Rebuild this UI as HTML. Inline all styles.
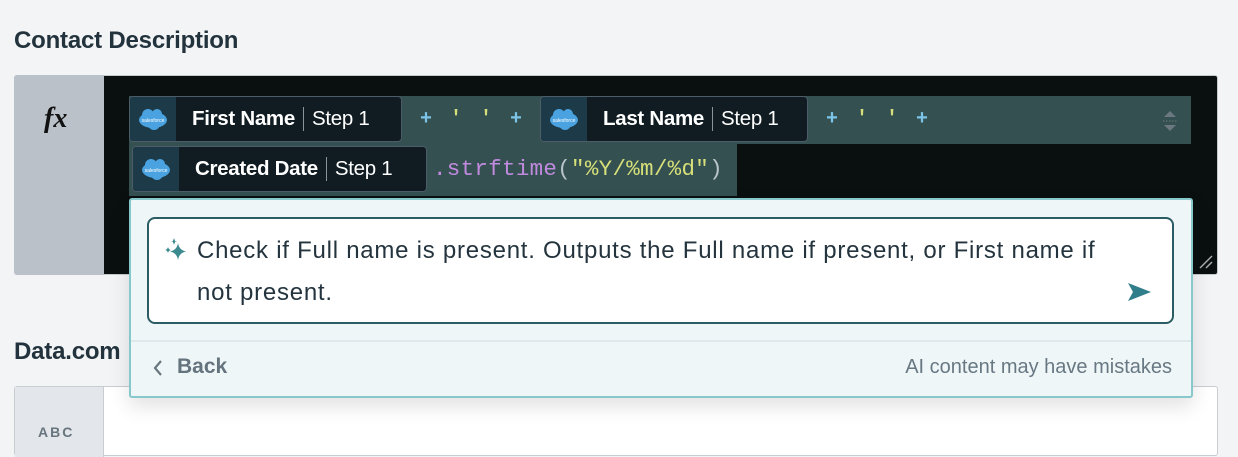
<!DOCTYPE html>
<html><head><style>
*{box-sizing:border-box;margin:0;padding:0}
body{width:1238px;height:450px;background:#f3f4f6;font-family:"Liberation Sans",sans-serif;position:relative;overflow:hidden;color:#24343e}
.a{position:absolute}
.h{font-weight:bold;font-size:24px;color:#23333d;letter-spacing:-0.2px}
.pill{position:absolute;height:46px;background:#111c22;border:1.5px solid #4c5c68;border-radius:4px;display:flex;align-items:center;color:#fff;font-size:20.5px;white-space:nowrap;overflow:hidden}
.pill .ic{width:46px;height:100%;background:#1c3a48;display:flex;align-items:center;justify-content:center;flex:none}
.pill b{margin-left:16px;letter-spacing:-0.3px}
.pill .sep{width:1px;height:24px;background:#8a949c;margin:0 8px}
.pill span.s{letter-spacing:-0.3px;margin-right:14px}
.op{position:absolute;color:#7cc5e8;font-size:20px;font-family:"Liberation Mono",monospace;letter-spacing:3px;font-weight:bold}
.q{color:#d6df7a}
</style></head><body>
<div class="a h" style="left:14px;top:27px">Contact Description</div>
<div class="a" style="left:14px;top:75px;width:1204px;height:200px;background:#0a0f10;border-radius:3px;border:1px solid #c4c9ce"></div>
<div class="a" style="left:14px;top:75px;width:90px;height:200px;background:#bac1c8;border-radius:3px 0 0 3px"></div>
<div class="a" style="left:44px;top:103px;font-family:'Liberation Serif',serif;font-style:italic;font-weight:bold;font-size:28px;color:#111">fx</div>
<div class="a" style="left:129px;top:96px;width:1062px;height:48px;background:#345050"></div>
<div class="a" style="left:129px;top:144px;width:608px;height:52px;background:#345050"></div>
<svg class="a" style="left:1160px;top:108px" width="20" height="26"><path d="M4 9 L10 3 L16 9Z M4 17 L10 23 L16 17Z" fill="#6b7880"/><path d="M3 13 H17" stroke="#6b7880" stroke-dasharray="1.5 1.5"/></svg>

<div class="pill" style="left:129px;top:96px;width:273px"><div class="ic"><svg width="34" height="24"><ellipse cx="17" cy="13" rx="14" ry="8" fill="#4aa3e0"/><circle cx="12" cy="8" r="6" fill="#4aa3e0"/><circle cx="21" cy="7" r="5" fill="#4aa3e0"/><circle cx="18" cy="17" r="6" fill="#4aa3e0"/><text x="17" y="15" font-size="5" fill="#fff" text-anchor="middle">salesforce</text></svg></div><b>First Name</b><div class="sep"></div><span class="s">Step 1</span></div>
<div class="op" style="left:420px;top:108px">+ <span class="q">' '</span> +</div>
<div class="pill" style="left:540px;top:96px;width:268px"><div class="ic"><svg width="34" height="24"><ellipse cx="17" cy="13" rx="14" ry="8" fill="#4aa3e0"/><circle cx="12" cy="8" r="6" fill="#4aa3e0"/><circle cx="21" cy="7" r="5" fill="#4aa3e0"/><circle cx="18" cy="17" r="6" fill="#4aa3e0"/><text x="17" y="15" font-size="5" fill="#fff" text-anchor="middle">salesforce</text></svg></div><b>Last Name</b><div class="sep"></div><span class="s">Step 1</span></div>
<div class="op" style="left:826px;top:108px">+ <span class="q">' '</span> +</div>
<div class="pill" style="left:132px;top:146px;width:295px"><div class="ic"><svg width="34" height="24"><ellipse cx="17" cy="13" rx="14" ry="8" fill="#4aa3e0"/><circle cx="12" cy="8" r="6" fill="#4aa3e0"/><circle cx="21" cy="7" r="5" fill="#4aa3e0"/><circle cx="18" cy="17" r="6" fill="#4aa3e0"/><text x="17" y="15" font-size="5" fill="#fff" text-anchor="middle">salesforce</text></svg></div><b>Created Date</b><div class="sep"></div><span class="s">Step 1</span></div>
<div class="a" style="left:433px;top:156px;font-family:'Liberation Mono',monospace;font-size:22.5px;color:#c08ade;white-space:nowrap;letter-spacing:0.3px">.strftime<span style="color:#b8c4cc">(</span><span class="q">"%Y/%m/%d"</span><span style="color:#b8c4cc">)</span></div>
<svg class="a" style="left:1196px;top:252px" width="18" height="18"><path d="M4 16 L16 4 M10 16 L16 10" stroke="#aaa" stroke-width="1.5"/></svg>

<div class="a h" style="left:14px;top:338px">Data.com</div>
<div class="a" style="left:14px;top:386px;width:1204px;height:70px;background:#fff;border:1.5px solid #c8cdd2;border-radius:3px"></div>
<div class="a" style="left:15px;top:387px;width:89px;height:70px;background:#e3e6ea;border-right:1.5px solid #c8cdd2"></div>
<div class="a" style="left:38px;top:424px;font-size:14px;font-weight:bold;letter-spacing:2px;color:#67757f">ABC</div>

<div class="a" style="left:129px;top:198px;width:1064px;height:200px;background:#eef6f8;border:2px solid #86c8cc;border-radius:3px;box-shadow:0 8px 20px rgba(0,0,0,0.12)"></div>
<div class="a" style="left:147px;top:217px;width:1027px;height:107px;background:#fff;border:2px solid #2c5c64;border-radius:8px"></div>
<svg class="a" style="left:163px;top:238px" width="26" height="26"><path d="M15 5 Q16 12 23 13.5 Q16 15 15 22 Q14 15 7 13.5 Q14 12 15 5Z" fill="#3a8a90"/><path d="M5 9 Q5.5 11.5 8 12 Q5.5 12.5 5 15 Q4.5 12.5 2 12 Q4.5 11.5 5 9Z" fill="#3a8a90"/><path d="M11 1 L12 3.5 L11 6 L10 3.5Z M8.5 3.5 L13.5 3.5" fill="#3a8a90" stroke="#3a8a90" stroke-width="0.6"/></svg>
<div class="a" style="left:197px;top:230px;width:960px;font-size:24px;letter-spacing:0.75px;line-height:42px;color:#24343e;white-space:nowrap">Check if Full name is present. Outputs the Full name if present, or First name if<br>not present.</div>
<svg class="a" style="left:1127px;top:281px" width="26" height="22"><path d="M1 2 L24 11 L1 20 L6 11Z" fill="#2f7e8a"/></svg>
<div class="a" style="left:131px;top:340px;width:1060px;height:2px;background:#dfe8ea"></div>
<svg class="a" style="left:152px;top:358px" width="12" height="20"><path d="M9 3 L3 10 L9 17" stroke="#6a7780" stroke-width="2.2" fill="none"/></svg>
<div class="a" style="left:177px;top:355px;font-size:21px;font-weight:bold;color:#64737d">Back</div>
<div class="a" style="left:856px;top:356px;font-size:20px;color:#687883;width:316px;text-align:right">AI content may have mistakes</div>
</body></html>
